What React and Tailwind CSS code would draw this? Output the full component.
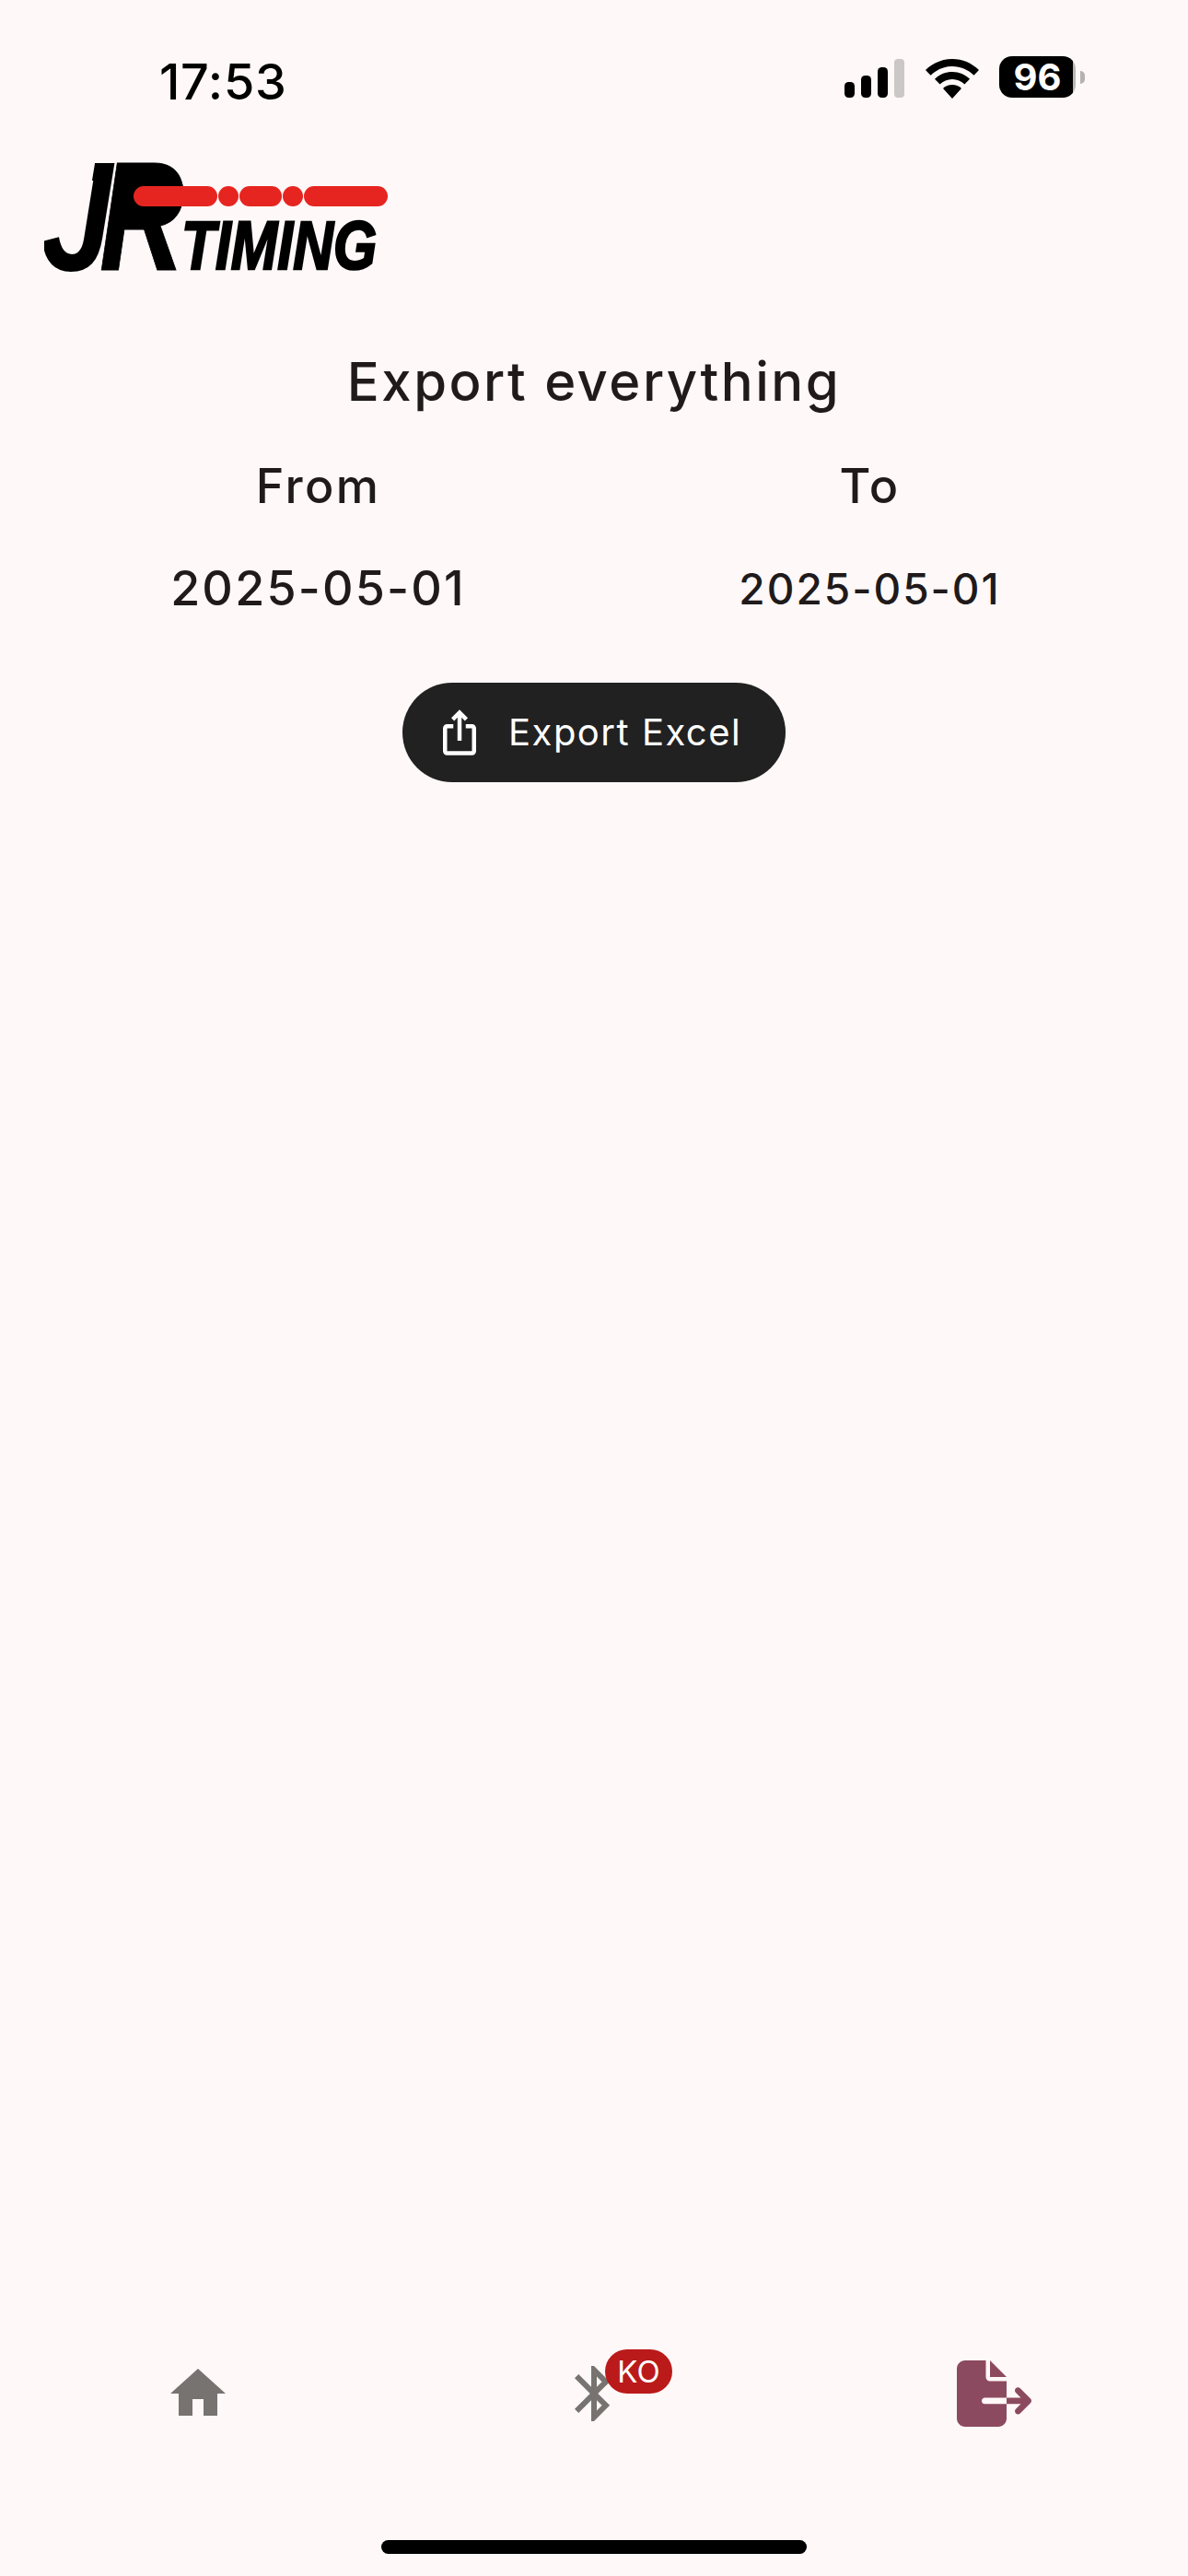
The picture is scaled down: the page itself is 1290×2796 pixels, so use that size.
import { FaFileExport } from 'react-icons/fa6';

const inter = 'font-["Inter",sans-serif]';

const StatusBar = () => (
  <div className="flex h-[64px] items-start justify-between pl-[173px] pr-[112px] mt-[62px]">
    <span className={`${inter} mt-[2px] text-[54px] leading-[50px] font-medium tracking-[0.7px] text-black`}>17:53</span>
    <div className="flex items-start -mt-[1px]">
      <svg width="66" height="44" viewBox="0 0 66 44" className="mt-[3px]">
        <rect x="0" y="25" width="11" height="17" rx="4.5" fill="#000" />
        <rect x="18" y="18" width="11" height="24" rx="4.5" fill="#000" />
        <rect x="36" y="9" width="11" height="33" rx="4.5" fill="#000" />
        <rect x="54" y="0" width="11" height="42" rx="4" fill="#cbc7c7" />
      </svg>
      <svg width="58" height="43" viewBox="0 0 58 43" className="ml-[22px] mt-[3px]">
        <path d="M29 0C18 0 8 4.300 0 12l5.500 5.800C12 11.500 20 8 29 8s17 3.500 23.500 9.800L58 12C50 4.300 40 0 29 0z" fill="#000" />
        <path d="M29 14c-7.500 0-14 3-19 7.800l5.600 5.800c3.500-3.400 8.200-5.500 13.400-5.500s9.900 2.100 13.400 5.500l5.600-5.800C43 17 36.500 14 29 14z" fill="#000" />
        <path d="M29 28c-4 0-7.400 1.500-10 4l10 11 10-11c-2.600-2.500-6-4-10-4z" fill="#000" />
      </svg>
      <div className="ml-[22px] flex items-center">
        <div className={`${inter} flex h-[45px] w-[83px] items-center justify-center rounded-[14px] bg-[linear-gradient(90deg,#000_96%,#bbb7b7_96%)] text-[40px] font-bold leading-none text-white`}>96</div>
        <div className="ml-[5px] h-[14px] w-[5px] rounded-r-full bg-[#b5b1b1]" />
      </div>
    </div>
  </div>
);

// JR + red timing strip + TIMING wordmark
const Logo = () => (
  <svg width="380" height="125" viewBox="0 0 380 125" className="ml-[48px] mt-[49px] block">
    <defs>
      <clipPath id="j-stem">
        <polygon points="55.4,0 51,27 -10,27 -10,125 100,125 100,0" />
      </clipPath>
    </defs>
    <g fontFamily="'Liberation Sans', sans-serif" fontWeight="700" fontStyle="italic" fill="#000">
      <text x="-4" y="118" fontSize="168" textLength="78" lengthAdjust="spacingAndGlyphs" clipPath="url(#j-stem)">J</text>
      <text x="60" y="118" fontSize="168" textLength="92" lengthAdjust="spacingAndGlyphs" stroke="#000" strokeWidth="1">R</text>
      <rect x="88" y="19" width="44" height="38" />
      <text x="149" y="117" fontSize="75" textLength="212" lengthAdjust="spacingAndGlyphs" stroke="#000" strokeWidth="2.500">TIMING</text>
    </g>
    <g fill="#e62520">
      <rect x="97" y="27" width="91" height="22" rx="11" />
      <circle cx="200" cy="38" r="11" />
      <rect x="212" y="27" width="46" height="22" rx="11" />
      <circle cx="270" cy="38" r="11" />
      <rect x="282" y="27" width="91" height="22" rx="11" />
    </g>
  </svg>
);

const NavIcon = ({ d }) => (
  <svg width="72" height="72" viewBox="0 0 24 24" fill="#767371">
    <path d={d} />
  </svg>
);

const App = () => (
  <div className={`${inter} flex h-[2796px] w-[1290px] flex-col bg-[#fff8f8] text-[#201a1b]`}>
    <StatusBar />
    <Logo />

    <h1 className="mt-[79px] text-center text-[58px] leading-[70px] font-[550] tracking-[2.5px]">Export everything</h1>

    <div className="mt-[42px] grid grid-cols-2 px-[46px] text-center">
      <p className="text-[52px] leading-[74px] font-[550] tracking-[2.4px]">From</p>
      <p className="text-[52px] leading-[74px] font-[550] tracking-[2.4px]">To</p>
      <p className="mt-[37px] text-[52px] leading-[74px] font-[450] tracking-[2.2px]">2025-05-01</p>
      <p className="mt-[37px] text-[46px] leading-[74px] font-[450] tracking-[2px]">2025-05-01</p>
    </div>

    <button className="mx-auto mt-[65px] flex h-[108px] w-[416px] items-center rounded-[54px] bg-[#212121] pl-[35px] text-white">
      <svg width="54" height="54" viewBox="0 0 24 24" fill="#fff">
        <path d="M16 5l-1.420 1.420-1.590-1.590V16h-1.980V4.830L9.420 6.420 8 5l4-4 4 4zm4 5v11c0 1.100-.9 2-2 2H6c-1.110 0-2-.9-2-2V10c0-1.110.89-2 2-2h3v2H6v11h12V10h-3V8h3c1.100 0 2 .89 2 2z" />
      </svg>
      <span className="ml-[26px] text-[40px] leading-none tracking-[1.5px]">Export Excel</span>
    </button>

    <div className="mt-auto grid grid-cols-3 justify-items-center">
      <NavIcon d="M10 20v-6h4v6h5v-8h3L12 3 2 12h3v8z" />
      <div className="relative h-[72px] w-[72px]">
        <NavIcon d="M17.710 7.710L12 2h-1v7.590L6.410 5 5 6.410 10.590 12 5 17.590 6.410 19 11 14.410V22h1l5.710-5.710-4.300-4.290 4.300-4.290zM13 5.830l1.880 1.880L13 9.590V5.830zm1.880 10.460L13 18.170v-3.760l1.880 1.880z" />
        <span className="absolute left-[48px] -top-[12px] flex h-[48px] w-[73px] items-center justify-center rounded-[24px] bg-[#ba1a1a] text-[33px] leading-none text-white">KO</span>
      </div>
      <div className="h-[72px] w-[72px]">
        <FaFileExport className="h-[72px] w-[81px] max-w-none text-[#8c4a60]" />
      </div>
    </div>

    <div className="mx-auto mb-[24px] mt-[123px] h-[15px] w-[462px] rounded-full bg-black" />
  </div>
);

export default App;
